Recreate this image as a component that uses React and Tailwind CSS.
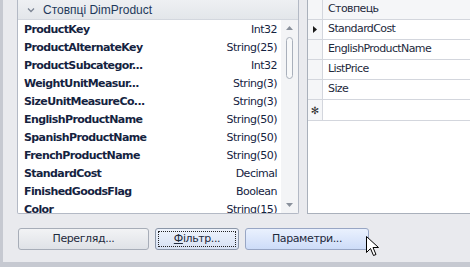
import React from 'react';

const columns = [
    ['ProductKey', 'Int32'],
    ['ProductAlternateKey', 'String(25)'],
    ['ProductSubcategor...', 'Int32'],
    ['WeightUnitMeasur...', 'String(3)'],
    ['SizeUnitMeasureCo...', 'String(3)'],
    ['EnglishProductName', 'String(50)'],
    ['SpanishProductName', 'String(50)'],
    ['FrenchProductName', 'String(50)'],
    ['StandardCost', 'Decimal'],
    ['FinishedGoodsFlag', 'Boolean'],
    ['Color', 'String(15)'],
];

const selected = ['StandardCost', 'EnglishProductName', 'ListPrice', 'Size'];

const font = { fontFamily: 'Tahoma, "DejaVu Sans", "Liberation Sans", sans-serif' };

const Cursor = () => (
    <svg width="13" height="21" viewBox="0 0 13 21" className="absolute left-[366px] top-[236px]">
        <path d="M0.5 0.5 L0.5 16.5 L4.5 12.5 L7.5 19.5 L10 18.5 L7 11.5 L12.5 11.5 Z" fill="#fff" stroke="#000" strokeWidth="1" />
    </svg>
);

const App = () => {
    return (
        <div className="relative w-[470px] h-[267px] overflow-hidden bg-[#e9eaee] flex" style={font}>
            {/* left edge strip */}
            <div className="w-[3px] h-full bg-[#c6c9d1]" />

            <div className="flex-1 flex flex-col">
                <div className="flex h-[215px] pl-[14px]">
                    {/* columns panel */}
                    <div className="w-[282px] h-[214px] border border-t-0 border-[#b3b9c5] rounded-b-[2px] flex flex-col bg-white">
                        <div className="h-[20px] flex items-center gap-[8px] px-[9px] bg-gradient-to-b from-[#eef0f3] to-[#e3e6ea] border-b border-[#d3d7de] text-[12px] text-[#1e395b]">
                            <svg width="8" height="6" viewBox="0 0 8 6">
                                <path d="M1 1.5 L4 4.5 L7 1.5" fill="none" stroke="#7c8594" strokeWidth="1.3" />
                            </svg>
                            <span className="leading-none" style={{ fontFamily: '"Liberation Sans", Arial, sans-serif' }}>Стовпці DimProduct</span>
                        </div>
                        <div className="flex-1 flex overflow-hidden">
                            <div className="flex-1 flex flex-col pl-[6px] pr-[4px] pt-[1px]">
                                {columns.map(([name, type]) => (
                                    <div key={name} className="h-[18px] shrink-0 flex items-center justify-between text-[11px] text-[#15233f] tracking-[-0.6px]">
                                        <span className="font-bold">{name}</span>
                                        <span className="tracking-[-0.5px]">{type}</span>
                                    </div>
                                ))}
                            </div>
                            {/* scrollbar */}
                            <div className="w-[17px] bg-[#f3f4f6] flex flex-col items-center pt-[6px] pb-[6px]">
                                <svg width="7" height="4" viewBox="0 0 7 4"><path d="M0 4 L3.5 0 L7 4 Z" fill="#8a919c" /></svg>
                                <div className="mt-[7px] w-[7px] h-[42px] rounded-[4px] border border-[#a9b0bb] bg-[#f7f8f9]" />
                                <div className="flex-1" />
                                <svg width="7" height="4" viewBox="0 0 7 4"><path d="M0 0 L3.5 4 L7 0 Z" fill="#8a919c" /></svg>
                            </div>
                        </div>
                    </div>

                    {/* selected columns grid */}
                    <div className="ml-[8px] flex-1 h-[214px] border-l border-b border-[#a9b0bb] bg-white flex flex-col text-[11px] text-[#1e2a3c] tracking-[-0.6px]">
                        <div className="flex h-[20px] border-b border-[#d3d6dd] bg-[#f5f6f8]">
                            <div className="w-[15px] border-r border-[#d3d6dd]" />
                            <div className="flex-1 flex items-center pl-[5px]">Стовпець</div>
                        </div>
                        {selected.map((s, i) => (
                            <div key={s} className="flex h-[20px] border-b border-[#d3d6dd]">
                                <div className="w-[15px] border-r border-[#d3d6dd] bg-[#f5f6f8] flex items-center justify-center">
                                    {i === 0 && (
                                        <svg width="4" height="7" viewBox="0 0 4 7"><path d="M0 0 L4 3.5 L0 7 Z" fill="#1a1a1a" /></svg>
                                    )}
                                </div>
                                <div className="flex-1 flex items-center pl-[5px]">{s}</div>
                            </div>
                        ))}
                        <div className="flex h-[21px] border-b border-[#d3d6dd]">
                            <div className="w-[15px] border-r border-[#d3d6dd] bg-[#f5f6f8] flex items-center justify-center text-[10px] text-[#333] tracking-normal">
                                ✻
                            </div>
                            <div className="flex-1" />
                        </div>
                    </div>
                </div>

                {/* buttons */}
                <div className="flex gap-[6px] pl-[15px] mt-[13px] text-[11px] text-[#1e2a3c] tracking-[-0.4px]">
                    <button className="w-[131px] h-[22px] rounded-[3px] border border-[#a7adb8] bg-gradient-to-b from-[#f2f3f5] to-[#dfe2e7] flex items-center justify-center">
                        Перегляд...
                    </button>
                    <button className="w-[84px] h-[22px] rounded-[3px] border border-[#8b96a8] bg-gradient-to-b from-[#eef3fc] to-[#d7e1f3] flex items-center justify-center p-[2px]">
                        <span className="w-full h-full border border-dotted border-[#222] flex items-center justify-center">
                            <span><span className="underline">Ф</span>ільтр...</span>
                        </span>
                    </button>
                    <button className="w-[124px] h-[22px] rounded-[3px] border border-[#98a6c4] bg-gradient-to-b from-[#eaf1fe] to-[#cddcf8] flex items-center justify-center">
                        Параметри...
                    </button>
                </div>
                <div className="flex-1" />
                <div className="h-[5px] bg-[#c6c9d1]" />
            </div>

            <Cursor />
        </div>
    );
};

export default App;
